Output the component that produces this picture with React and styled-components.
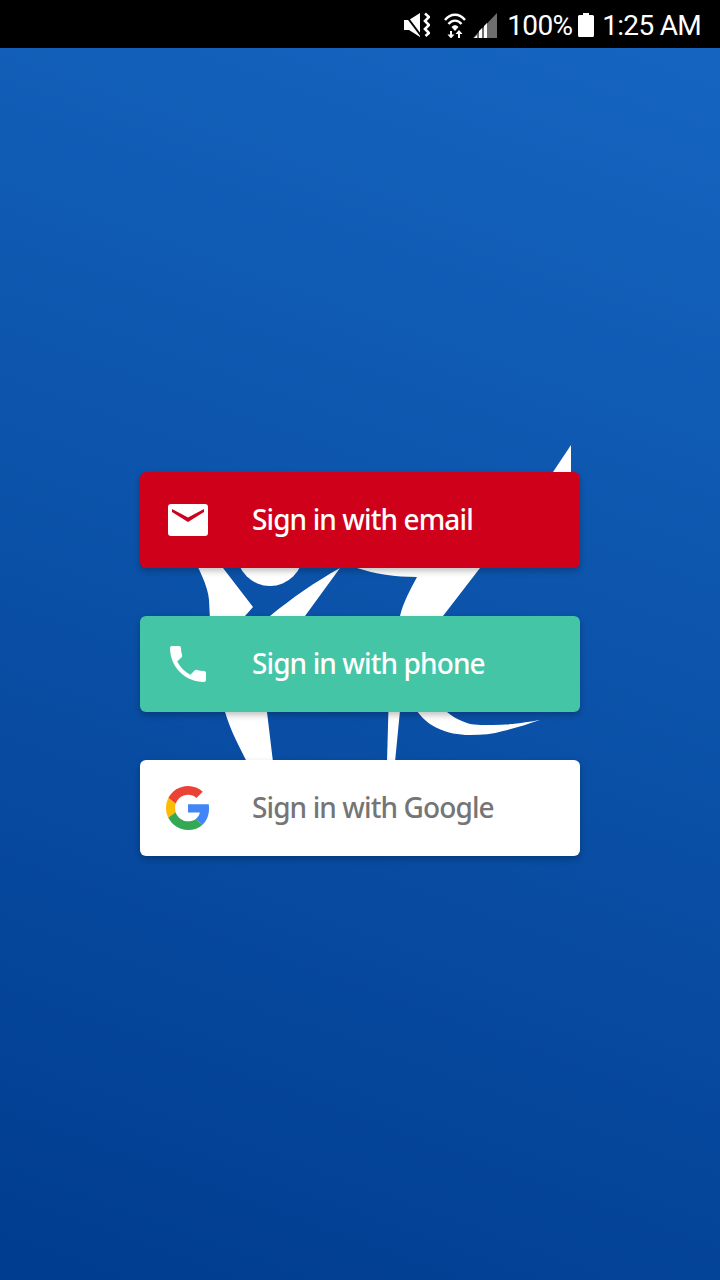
import React from 'react';
import styled, { createGlobalStyle } from 'styled-components';

const GlobalStyle = createGlobalStyle`
  html, body {
    margin: 0;
    padding: 0;
    background: #000;
  }
  * {
    box-sizing: border-box;
  }
`;

const App = () => {
  return (
    <>
      <GlobalStyle />
      <Screen>
        <StatusBar>
          <StatusItem>
            <MuteIcon />
          </StatusItem>
          <StatusItem $gap={14}>
            <WifiIcon />
          </StatusItem>
          <StatusItem $gap={7}>
            <SignalIcon />
          </StatusItem>
          <StatusItem $gap={10}>100%</StatusItem>
          <StatusItem $gap={6}>
            <BatteryIcon />
          </StatusItem>
          <StatusItem $gap={8}>1:25 AM</StatusItem>
        </StatusBar>
        <Main>
          <Logo />
          <SignInButton $bg="#cf0019" $color="#fff">
            <IconSlot>
              <MailIcon />
            </IconSlot>
            <Label>Sign in with email</Label>
          </SignInButton>
          <SignInButton $bg="#44c5a6" $color="#fff">
            <IconSlot>
              <PhoneIcon />
            </IconSlot>
            <Label>Sign in with phone</Label>
          </SignInButton>
          <SignInButton $bg="#fff" $color="#757575">
            <IconSlot>
              <GoogleIcon />
            </IconSlot>
            <Label>Sign in with Google</Label>
          </SignInButton>
        </Main>
      </Screen>
    </>
  );
};

// ------------------------------ Icons ------------------------------------

const MuteIcon = () => (
  <svg width="27" height="26" viewBox="0 0 27 26" fill="#fff">
    <path d="M1 8h5L17 1V25L6 18H1z" />
    <path d="M1 1 19 25" stroke="#000" strokeWidth="2" />
    <path
      d="M22 1.500l4 3.500-4 4 4 4-4 4 4 4-3.500 3"
      fill="none"
      stroke="#fff"
      strokeWidth="2.600"
    />
  </svg>
);

const WifiIcon = () => (
  <svg width="22" height="26" viewBox="0 0 22 26" fill="#fff">
    <path
      d="M1 8C6.500 1 15.500 1 21 8M4.500 12C8 7.500 14 7.500 17.500 12"
      fill="none"
      stroke="#fff"
      strokeWidth="2.400"
    />
    <path d="M7.500 15C9.500 12.500 12.500 12.500 14.500 15L11 19z" />
    <path d="M6 19h2v3.500h2.500L7 26.500 3.500 22.500H6z" />
    <path d="M14 26v-4h-2.500L15 18l3.500 4H16v4z" />
  </svg>
);

const SignalIcon = () => (
  <svg width="24" height="25" viewBox="0 0 24 25">
    <path d="M24 0V25H0z" fill="#6e6e6e" />
    <path d="M1 25l3-3v3zM6 25v-7l3-3v10zM11 25V13l3-3v15z" fill="#fff" />
  </svg>
);

const BatteryIcon = () => (
  <svg width="16" height="24" viewBox="0 0 16 24" fill="#fff">
    <path d="M5 0h6v2h3.500a1.500 1.500 0 0 1 1.500 1.500V22.500a1.500 1.500 0 0 1-1.500 1.500H1.500A1.500 1.500 0 0 1 0 22.500V3.500A1.500 1.500 0 0 1 1.500 2H5z" />
  </svg>
);

const MailIcon = () => (
  <svg width="40" height="32" viewBox="0 0 40 32">
    <rect width="40" height="32" rx="3" fill="#fff" />
    <path d="M4 8 20 18 36 8V5L20 13.500 4 5z" fill="#cf0019" />
  </svg>
);

const PhoneIcon = () => (
  <svg width="48" height="48" viewBox="0 0 24 24" fill="#fff">
    <path d="M6.620 10.790c1.440 2.830 3.760 5.140 6.590 6.590l2.200-2.200c.27-.27.67-.36 1.020-.24 1.120.37 2.330.57 3.570.57.550 0 1 .45 1 1V20c0 .55-.45 1-1 1-9.390 0-17-7.610-17-17 0-.55.450-1 1-1h3.500c.55 0 1 .45 1 1 0 1.250.2 2.450.57 3.570.11.350.03.740-.25 1.020l-2.200 2.200z" />
  </svg>
);

const GoogleIcon = () => (
  <svg width="44" height="44" viewBox="0 0 48 48">
    <path
      fill="#EA4335"
      d="M24 9.500c3.540 0 6.710 1.220 9.210 3.600l6.850-6.850C35.900 2.380 30.470 0 24 0 14.620 0 6.510 5.380 2.560 13.220l7.980 6.190C12.430 13.720 17.740 9.500 24 9.500z"
    />
    <path
      fill="#4285F4"
      d="M46.980 24.550c0-1.570-.15-3.090-.38-4.550H24v9.020h12.940c-.58 2.960-2.260 5.480-4.780 7.180l7.730 6c4.510-4.180 7.090-10.360 7.090-17.650z"
    />
    <path
      fill="#FBBC05"
      d="M10.530 28.590c-.48-1.450-.76-2.990-.76-4.590s.27-3.140.76-4.590l-7.980-6.190C.92 16.460 0 20.120 0 24c0 3.880.92 7.540 2.560 10.780l7.970-6.190z"
    />
    <path
      fill="#34A853"
      d="M24 48c6.480 0 11.930-2.130 15.890-5.810l-7.730-6c-2.150 1.450-4.920 2.300-8.160 2.300-6.260 0-11.570-4.220-13.470-9.910l-7.980 6.190C6.510 42.620 14.620 48 24 48z"
    />
  </svg>
);

// viewBox is in page coordinates so the pieces can be read straight off the screenshot.
// Most of the mark sits behind the buttons.
const Logo = () => (
  <LogoMark viewBox="190 440 390 340" fill="#fff">
    {/* right stroke with the tip above the red button */}
    <path d="M571 445 553 472 500 540 340 550C345 558 350 566 357 568C375 574 395 577 417 577C410 590 403 603 400 616L398 640H420L443 616 480 568 571 473Z" />
    {/* left limb */}
    <path d="M190 550C198 568 208 585 209 600L212 660 225 712C231 732 240 748 247 762H273L267 712 262 660 245 616 253 607 223 568 215 550Z" />
    {/* head */}
    <circle cx="270" cy="553" r="33" />
    {/* arm */}
    <path d="M340 568C315 582 292 598 270 616L250 640H290L305 616Z" />
    {/* lower stem and swoosh */}
    <path d="M389 690 387 762H395L402 690Z" />
    <path d="M405 690C415 712 425 722 437 728C448 733 458 735 470 735C482 735 493 734 503 731C516 728 528 724 540 720C528 722 510 725 493 725C480 725 473 725 467 723C458 720 452 716 447 712L430 690Z" />
  </LogoMark>
);

// ------------------------------ Styled component ------------------------------------

const Screen = styled.div`
  width: 720px;
  height: 1280px;
  display: flex;
  flex-direction: column;
  overflow: hidden;
`;

const StatusBar = styled.div`
  height: 48px;
  flex: none;
  background: #000;
  display: flex;
  align-items: center;
  justify-content: flex-end;
  padding: 2px 19px 0 0;
`;

const StatusItem = styled.span`
  display: flex;
  align-items: center;
  margin-left: ${(props) => props.$gap || 0}px;
  color: #fff;
  font-family: Roboto, sans-serif;
  font-size: 28px;
  letter-spacing: -0.7px;
  white-space: nowrap;
`;

const Main = styled.main`
  position: relative;
  flex: 1;
  display: flex;
  flex-direction: column;
  align-items: center;
  justify-content: center;
  gap: 48px;
  background: linear-gradient(200deg, #1565c0, #003c8f);
`;

const LogoMark = styled.svg`
  position: absolute;
  left: 190px;
  top: 392px;
  width: 390px;
  height: 340px;
`;

const SignInButton = styled.button`
  position: relative;
  width: 440px;
  height: 96px;
  flex: none;
  display: flex;
  align-items: center;
  padding: 0;
  border: 0;
  border-radius: 6px;
  background: ${(props) => props.$bg};
  color: ${(props) => props.$color};
  box-shadow: 0 3px 6px rgba(0, 0, 0, 0.25);
`;

const IconSlot = styled.span`
  width: 112px;
  flex: none;
  display: flex;
  justify-content: center;
  padding-right: 16px;
`;

const Label = styled.span`
  margin-top: -2px;
  font-family: 'Noto Sans', sans-serif;
  font-size: 28px;
  font-weight: 500;
  letter-spacing: -0.9px;
  text-align: left;
`;

export default App;
